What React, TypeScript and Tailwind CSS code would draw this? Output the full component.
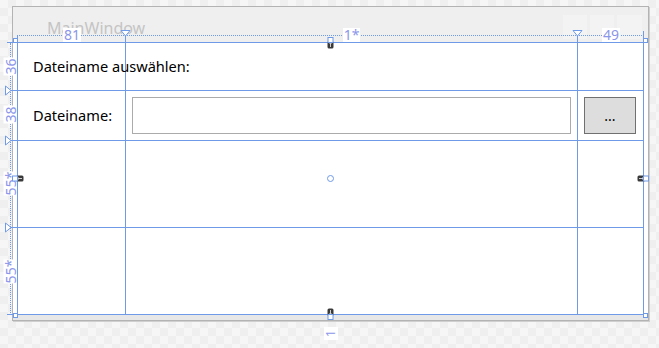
import React from "react";

const font = { fontFamily: '"Noto Sans", "Open Sans", sans-serif' };

function DownTri({ x }: { x: number }) {
  return (
    <svg className="absolute" style={{ left: x - 5, top: 30 }} width="11" height="7" viewBox="0 0 11 7">
      <path d="M1 0.5 L10 0.5 L5.5 6 Z" fill="white" stroke="#6f9ae8" strokeWidth="1" />
    </svg>
  );
}

function RightTri({ y }: { y: number }) {
  return (
    <svg className="absolute" style={{ left: 5, top: y - 5 }} width="7" height="11" viewBox="0 0 7 11">
      <path d="M0.5 1 L0.5 10 L6 5.5 Z" fill="white" stroke="#6f9ae8" strokeWidth="1" />
    </svg>
  );
}

function Corner({ x, y }: { x: number; y: number }) {
  return <div className="absolute w-[5px] h-[5px] border border-[#6f9ae8] bg-white" style={{ left: x, top: y }} />;
}

function VHandle({ x, y, flip }: { x: number; y: number; flip?: boolean }) {
  return (
    <svg className="absolute" style={{ left: x, top: y }} width="7" height="12" viewBox="0 0 7 12">
      <g transform={flip ? "rotate(180 3.5 6)" : undefined}>
        <rect x="0.5" y="4" width="6" height="7.5" rx="1.5" fill="#3a3a3a" />
        <path d="M2.5 6.5 L4.5 6.5 M3.5 6.5 L3.5 10" stroke="#cfcfcf" strokeWidth="1" />
        <rect x="1" y="0.5" width="5" height="5" fill="white" stroke="#6f9ae8" strokeWidth="1" />
      </g>
    </svg>
  );
}

function HHandle({ x, y, flip }: { x: number; y: number; flip?: boolean }) {
  return (
    <svg className="absolute" style={{ left: x, top: y }} width="12" height="7" viewBox="0 0 12 7">
      <g transform={flip ? "rotate(180 6 3.5)" : undefined}>
        <rect x="4" y="0.5" width="7.5" height="6" rx="1.5" fill="#3a3a3a" />
        <path d="M6.5 2.5 L6.5 4.5 M6.5 3.5 L10 3.5" stroke="#cfcfcf" strokeWidth="1" />
        <rect x="0.5" y="1" width="5" height="5" fill="white" stroke="#6f9ae8" strokeWidth="1" />
      </g>
    </svg>
  );
}

function TopLabel({ x, text, w }: { x: number; text: string; w: number }) {
  return (
    <div
      className="absolute h-[14px] bg-white text-[#8c96ea] text-[14px] leading-[14px] flex items-center justify-center"
      style={{ left: x, top: 28, width: w, ...font }}
    >
      {text}
    </div>
  );
}

function SideLabel({ cy, text, w }: { cy: number; text: string; w: number }) {
  return (
    <div
      className="absolute h-[13px] bg-white text-[#8c96ea] text-[14px] leading-[13px] flex items-center justify-center -rotate-90"
      style={{ left: 10 - w / 2, top: cy - 6.5, width: w, ...font }}
    >
      {text}
    </div>
  );
}

export default function App() {
  return (
    <div
      className="relative w-[659px] h-[348px] overflow-hidden bg-[repeating-conic-gradient(#efefef_0%_25%,#f6f6f6_0%_50%)] bg-[length:16px_16px] pt-[6px] pl-[12px]"
      style={font}
    >
      {/* Window */}
      <div className="w-[637px] h-[315px] border border-[#b3b3b3] flex flex-col shadow-[1px_1px_0_#cfcfcf]">
        <div className="h-[35px] bg-[#efefef] flex items-start">
          <div className="pl-[34px] pt-[11px] text-[16px] leading-[20px] text-[#c4c4c4]">MainWindow</div>
          <div className="ml-auto mt-[8px] mr-[6px] flex gap-[3px]">
            <div className="w-[24px] h-[24px] bg-[#f3f3f3]" />
            <div className="w-[24px] h-[24px] bg-[#f3f3f3]" />
            <div className="w-[25px] h-[24px] bg-[#f3f3f3]" />
          </div>
        </div>
        <div className="flex-1 bg-white flex flex-col">
          <div className="ml-[4px] w-[627px] h-[273px] border border-[#6f9ae8] grid grid-cols-[108px_452px_65px] grid-rows-[48px_50px_87px_86px]">
            {/* Row 1 */}
            <div className="relative border-r border-b border-[#6f9ae8]">
              <div className="absolute left-[15px] top-0 h-[47px] flex items-center whitespace-nowrap text-[14.6px] leading-none text-black">
                Dateiname auswählen:
              </div>
            </div>
            <div className="border-r border-b border-[#6f9ae8]" />
            <div className="border-b border-[#6f9ae8]" />
            {/* Row 2 */}
            <div className="border-r border-b border-[#6f9ae8] flex items-center pl-[15px] text-[14.6px] leading-none text-black whitespace-nowrap">
              Dateiname:
            </div>
            <div className="border-r border-b border-[#6f9ae8] p-[6px]">
              <div className="w-full h-full border border-[#ababab] bg-white" />
            </div>
            <div className="border-b border-[#6f9ae8] pt-[6px] pb-[6px] pl-[6px] pr-[7px]">
              <div className="w-full h-full border border-[#707070] bg-[#dddddd] flex items-center justify-center text-[14px] leading-none text-black">
                ...
              </div>
            </div>
            {/* Row 3 */}
            <div className="border-r border-b border-[#6f9ae8]" />
            <div className="border-r border-b border-[#6f9ae8]" />
            <div className="border-b border-[#6f9ae8]" />
            {/* Row 4 */}
            <div className="border-r border-[#6f9ae8]" />
            <div className="border-r border-[#6f9ae8]" />
            <div />
          </div>
          <div className="flex-1 bg-[#e7e7e7]" />
        </div>
      </div>

      {/* Designer adorners */}
      <div className="absolute inset-0 pointer-events-none">
        {/* top ruler */}
        <div className="absolute left-[17px] top-[35px] w-[627px] border-t border-dotted border-[#6f9ae8]" />
        <div className="absolute left-[17px] top-[35px] w-px h-[7px] bg-[#6f9ae8]" />
        <div className="absolute left-[125px] top-[35px] w-px h-[7px] bg-[#6f9ae8]" />
        <div className="absolute left-[577px] top-[35px] w-px h-[7px] bg-[#6f9ae8]" />
        <div className="absolute left-[643px] top-[31px] w-px h-[11px] bg-[#6f9ae8]" />
        <DownTri x={125} />
        <DownTri x={577} />
        <TopLabel x={63} w={18} text="81" />
        <TopLabel x={343} w={17} text="1*" />
        <TopLabel x={602} w={18} text="49" />

        {/* left ruler */}
        <div className="absolute left-[10px] top-[43px] h-[272px] border-l border-dotted border-[#6f9ae8]" />
        <div className="absolute left-[7px] top-[42px] w-[10px] h-px bg-[#6f9ae8]" />
        <div className="absolute left-[7px] top-[314px] w-[10px] h-px bg-[#6f9ae8]" />
        <div className="absolute left-[11px] top-[90px] w-[6px] h-px bg-[#6f9ae8]" />
        <div className="absolute left-[11px] top-[140px] w-[6px] h-px bg-[#6f9ae8]" />
        <div className="absolute left-[11px] top-[227px] w-[6px] h-px bg-[#6f9ae8]" />
        <RightTri y={90} />
        <RightTri y={140} />
        <RightTri y={227} />
        <SideLabel cy={66} w={18} text="36" />
        <SideLabel cy={114} w={18} text="38" />
        <SideLabel cy={183} w={24} text="55*" />
        <SideLabel cy={271} w={24} text="55*" />

        {/* corners */}
        <Corner x={13} y={38} />
        <Corner x={643} y={38} />
        <Corner x={13} y={313} />
        <Corner x={643} y={313} />

        {/* edge handles */}
        <VHandle x={327} y={37} />
        <VHandle x={327} y={308} flip />
        <HHandle x={12} y={175} />
        <HHandle x={637} y={175} flip />

        {/* center */}
        <div className="absolute left-[327px] top-[175px] w-[7px] h-[7px] rounded-full border border-[#6f9ae8] bg-white" />

        {/* bottom label */}
        <div
          className="absolute left-[324px] top-[327px] w-[14px] h-[13px] bg-white text-[#8c96ea] text-[13px] leading-none flex items-center justify-center"
        >
          <span className="-rotate-90 inline-block">1</span>
        </div>
      </div>
    </div>
  );
}
